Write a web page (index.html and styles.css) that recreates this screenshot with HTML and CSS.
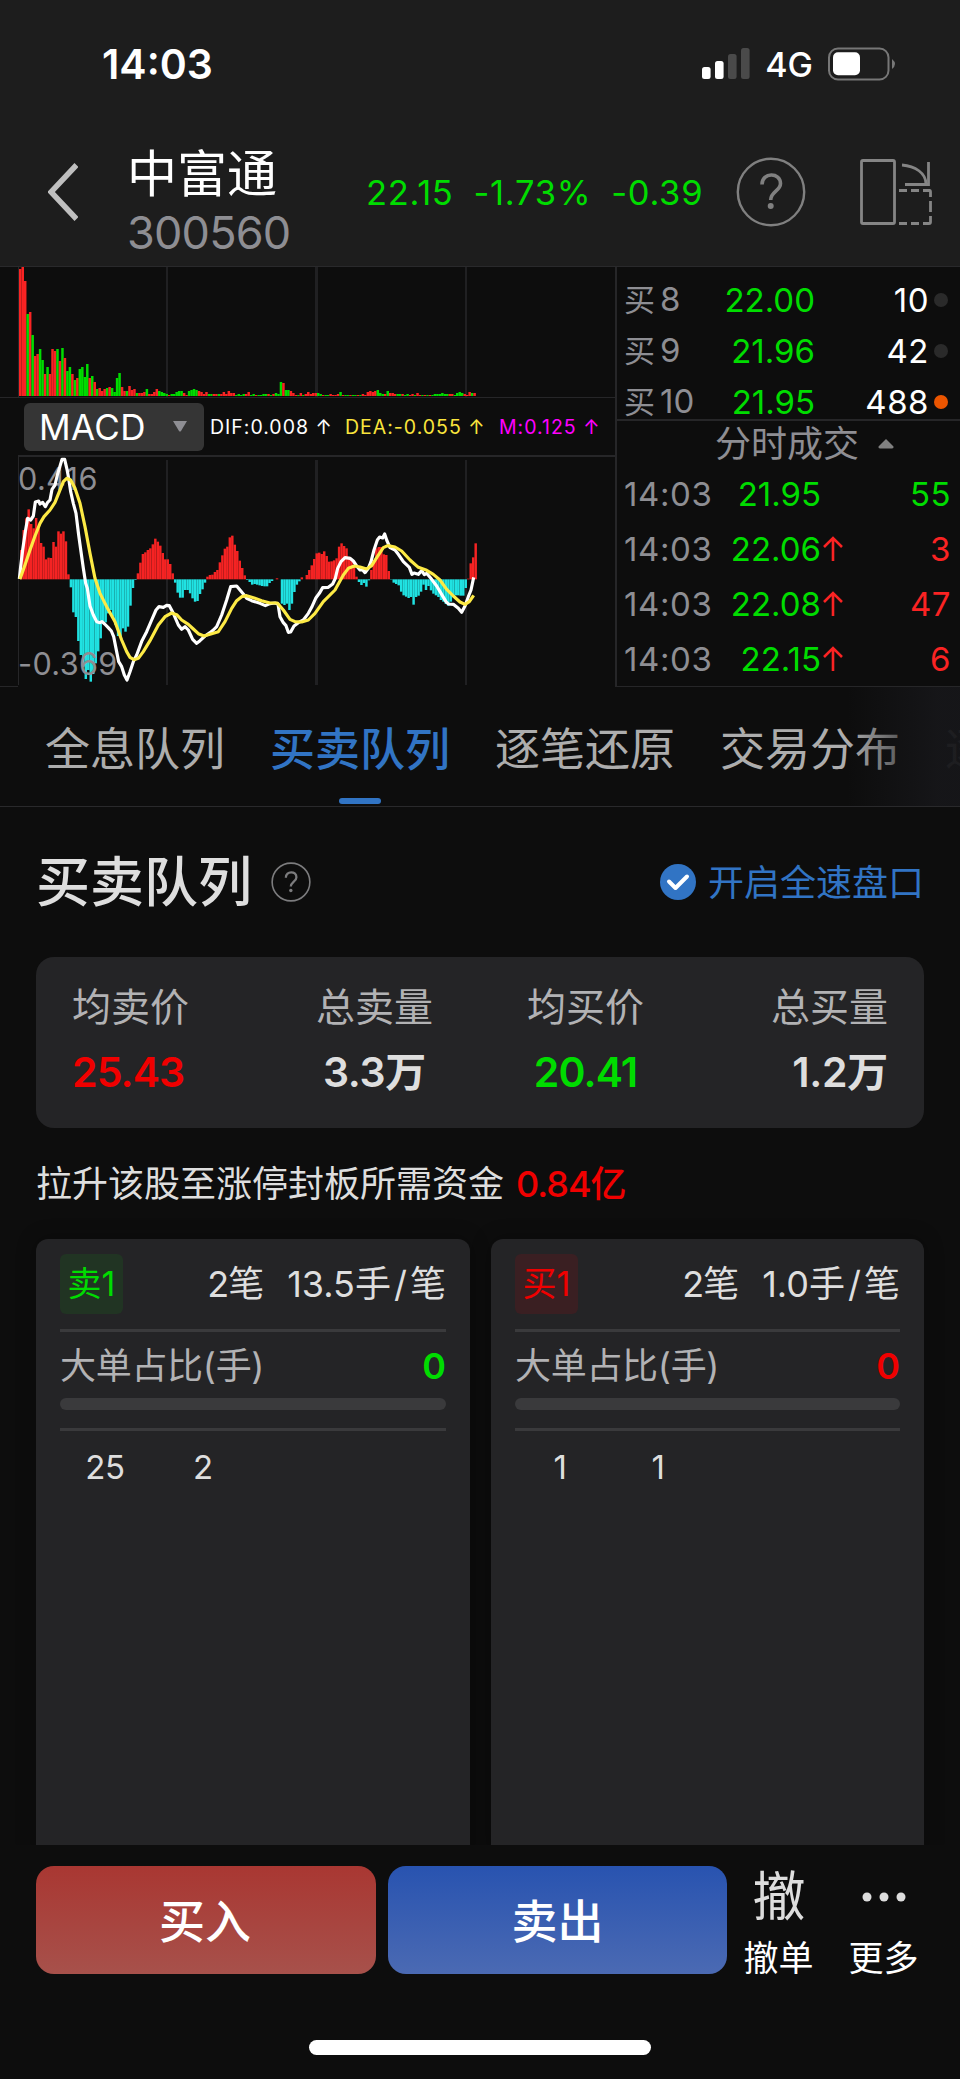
FILE: index.html
```html
<!DOCTYPE html>
<html lang="zh-CN">
<head>
    <meta charset="UTF-8">
    <meta name="viewport" content="width=device-width, initial-scale=1.0">
    <title>中富通 300560</title>
    <link rel="stylesheet" href="styles.css">
</head>
<body>
    <header class="header">
        <div class="status">
            <span class="clock">14:03</span>
            <div class="status-icons">
                <svg class="signal" width="48" height="32" viewBox="0 0 48 32">
                    <rect x="0" y="19" width="8.6" height="12" rx="2.5" fill="#fff"/>
                    <rect x="13" y="13" width="8.6" height="18" rx="2.5" fill="#fff"/>
                    <rect x="26" y="6" width="8.6" height="25" rx="2.5" fill="#4a4a4a"/>
                    <rect x="39" y="0" width="8.6" height="31" rx="2.5" fill="#4a4a4a"/>
                </svg>
                <span class="network">4G</span>
                <svg class="battery" width="68" height="34" viewBox="0 0 68 34">
                    <rect x="1" y="1.5" width="59.5" height="31" rx="9" fill="none" stroke="#777" stroke-width="2"/>
                    <rect x="5" y="5.3" width="27" height="23" rx="5" fill="#fff"/>
                    <path d="M64 12 Q70 17 64 22 Z" fill="#777"/>
                </svg>
            </div>
        </div>
        <div class="nav">
            <svg class="back" width="30" height="58" viewBox="0 0 30 58">
                <path d="M28.500 2 L3 29 L28.500 56" fill="none" stroke="#bfbfbf" stroke-width="5.500"/>
            </svg>
            <div class="stock">
                <span class="stock-name">中富通</span>
                <span class="stock-code">300560</span>
            </div>
            <div class="quote">
                <span class="q-price">22.15</span>
                <span class="q-percent">-1.73%</span>
                <span class="q-change">-0.39</span>
            </div>
            <svg class="help" width="70" height="70" viewBox="0 0 70 70">
                <circle cx="35" cy="35" r="33.200" fill="none" stroke="#808080" stroke-width="2.400"/>
                <path d="M26 27.500 C26 15 44.500 15 44.500 26.500 C44.500 34 34.700 34.500 34.700 43" fill="none" stroke="#808080" stroke-width="3.600"/>
                <circle cx="34.700" cy="49" r="3" fill="#808080"/>
            </svg>
            <svg class="rotate" width="74" height="68" viewBox="0 0 74 68" fill="none" stroke="#858585" stroke-width="2.800">
                <rect x="2.500" y="2.500" width="33" height="63" rx="1.500"/>
                <path d="M43 7 C56 8 67 15 67 26"/>
                <path d="M69.500 4 V26.500 H46"/>
                <path d="M40 32.500 H48 M52 32.500 H60 M64 32.500 H70.500 Q71.500 32.500 71.500 34 V39 M71.500 43 V54 M71.500 58 V64 Q71.500 65.500 70 65.500 H64 M60 65.500 H52 M48 65.500 H40"/>
            </svg>
        </div>
    </header>

    <section class="market">
        <div class="charts">
            <svg class="volume" id="volume" width="615" height="130" viewBox="0 0 615 130">
                <path class="grid-line" d="M166 0h2v130h-2z M315 0h3v130h-3z M465 0h2v130h-2z"/>
                <path class="axis-line" d="M18 0h1v130h-1z"/>
            </svg>
            <div class="indicator">
                <div class="select">
                    <span>MACD</span>
                    <svg width="14" height="11" viewBox="0 0 14 11"><path d="M0 0 H14 L8 10 Q7 11 6 10 Z" fill="#8e8e93"/></svg>
                </div>
                <span class="dif">DIF:0.008 ↑</span>
                <span class="dea">DEA:-0.055 ↑</span>
                <span class="macd">M:0.125 ↑</span>
            </div>
            <svg class="macd-chart" id="macd" width="615" height="232" viewBox="0 15 1845 696">
                <path class="grid-line" d="M498 30h6v675h-6z M945 30h9v675h-9z M1395 30h6v675h-6z"/>
                <path class="axis-line" d="M54 15h1791v6h-1791z M54 15h3v690h-3z M0 708h54v3h-54z"/>
                <g id="macdBars"></g>
                <text class="axis-label" x="54" y="119">0.416</text>
                <text class="axis-label" x="54" y="676">-0.369</text>
                <polyline class="line-dif" points="58,387 62,350 68,300 76,245 83,205 92,210 100,198 106,156 116,153 120,162 128,157 136,170 143,157 150,150 156,118 165,105 172,75 178,55 186,28 194,28 201,58 206,85 212,125 220,160 228,190 236,255 243,305 250,355 257,400 262,415 270,468 280,495 290,515 300,518 306,515 314,522 324,532 334,543 341,560 348,595 356,635 365,650 373,675 381,690 390,665 400,635 410,615 426,572 440,545 455,510 468,480 477,470 490,472 500,466 508,467 520,490 535,525 545,538 555,530 565,540 578,568 590,580 600,572 615,558 630,548 640,540 650,530 665,495 680,450 692,410 710,408 720,420 730,432 740,445 755,452 780,460 796,467 810,461 825,459 834,462 840,500 850,518 858,527 865,547 872,546 882,528 895,518 910,510 925,490 935,472 948,443 958,430 968,413 985,412 998,402 1006,385 1013,355 1023,335 1035,323 1050,325 1060,333 1070,348 1080,360 1088,360 1095,368 1105,355 1113,335 1122,300 1132,270 1139,261 1148,264 1154,252 1160,270 1170,293 1185,300 1195,313 1210,335 1228,352 1236,373 1242,369 1255,373 1265,362 1273,374 1280,370 1295,388 1310,408 1325,433 1338,455 1345,462 1360,463 1375,475 1385,487 1395,468 1405,440 1413,420 1421,382"/>
                <polyline class="line-dea" points="60,387 75,345 90,300 105,258 120,220 132,200 150,180 165,157 178,125 190,95 200,85 212,90 225,115 240,160 255,230 270,310 285,385 300,430 320,470 345,515 365,570 380,605 390,622 402,629 415,625 430,605 450,572 475,525 495,500 515,489 530,494 545,510 565,523 580,537 595,551 612,558 630,553 655,545 675,515 695,475 710,452 725,440 740,437 760,443 785,452 810,459 832,459 850,480 870,508 885,515 905,516 925,510 945,490 970,455 1005,420 1030,375 1045,355 1063,348 1080,351 1100,357 1115,347 1132,320 1150,293 1163,287 1185,291 1205,303 1230,330 1255,352 1280,361 1300,373 1320,390 1340,418 1360,438 1380,456 1395,463 1408,455 1421,436"/>
            </svg>
        </div>
        <div class="side">
            <div class="bids">
                <div class="bid"><span class="label">买<i>8</i></span><span class="price">22.00</span><span class="amount">10</span><b class="dot"></b></div>
                <div class="bid"><span class="label">买<i>9</i></span><span class="price">21.96</span><span class="amount">42</span><b class="dot"></b></div>
                <div class="bid"><span class="label">买<i>10</i></span><span class="price">21.95</span><span class="amount">488</span><b class="dot hot"></b></div>
            </div>
            <div class="ticks-title">
                <span>分时成交</span>
                <svg width="16" height="10" viewBox="0 0 16 10"><path d="M8 0 L15.500 7.500 Q16 9.500 14 9.500 H2 Q0 9.500 .5 7.500 Z" fill="#808080"/></svg>
            </div>
            <div class="tick"><span class="time">14:03</span><span class="price">21.95</span><span class="arrow"></span><span class="amount down">55</span></div>
            <div class="tick"><span class="time">14:03</span><span class="price">22.06</span><span class="arrow"><svg width="20" height="26" viewBox="0 0 20 26"><path d="M10 25 V2 M1 11 L10 2 L19 11"/></svg></span><span class="amount up">3</span></div>
            <div class="tick"><span class="time">14:03</span><span class="price">22.08</span><span class="arrow"><svg width="20" height="26" viewBox="0 0 20 26"><path d="M10 25 V2 M1 11 L10 2 L19 11"/></svg></span><span class="amount up">47</span></div>
            <div class="tick"><span class="time">14:03</span><span class="price">22.15</span><span class="arrow"><svg width="20" height="26" viewBox="0 0 20 26"><path d="M10 25 V2 M1 11 L10 2 L19 11"/></svg></span><span class="amount up">6</span></div>
        </div>
    </section>

    <nav class="tabs">
        <span class="tab">全息队列</span>
        <span class="tab active">买卖队列</span>
        <span class="tab">逐笔还原</span>
        <span class="tab">交易分布</span>
        <span class="tab">逐笔</span>
    </nav>

    <main class="content">
        <div class="section-head">
            <h1>买卖队列</h1>
            <svg class="tip" width="40" height="40" viewBox="0 0 70 70">
                <circle cx="35" cy="35" r="33" fill="none" stroke="#7c7c7e" stroke-width="2.800"/>
                <path d="M26 27.500 C26 15 44.500 15 44.500 26.500 C44.500 34 34.700 34.500 34.700 43" fill="none" stroke="#7c7c7e" stroke-width="4"/>
                <circle cx="34.700" cy="50" r="3" fill="#7c7c7e"/>
            </svg>
            <div class="full-speed">
                <svg width="36" height="36" viewBox="0 0 36 36">
                    <circle cx="18" cy="18" r="18" fill="#3174c4"/>
                    <path d="M9 17.500 L15.500 24 L27 12.500" fill="none" stroke="#fff" stroke-width="4" stroke-linecap="round" stroke-linejoin="round"/>
                </svg>
                <span>开启全速盘口</span>
            </div>
        </div>

        <div class="summary">
            <div class="pair">
                <div class="stat"><span>均卖价</span><strong class="red">25.43</strong></div>
                <div class="stat"><span>总卖量</span><strong>3.3万</strong></div>
            </div>
            <div class="pair">
                <div class="stat"><span>均买价</span><strong class="green">20.41</strong></div>
                <div class="stat last"><span>总买量</span><strong>1.2万</strong></div>
            </div>
        </div>

        <p class="funds">拉升该股至涨停封板所需资金<strong>0.84亿</strong></p>

        <div class="queues">
            <div class="queue">
                <div class="queue-head">
                    <span class="badge sell">卖1</span>
                    <span class="count">2笔</span>
                    <span>13.5手<i>/</i>笔</span>
                </div>
                <div class="ratio"><span>大单占比(手)</span><strong class="green">0</strong></div>
                <div class="bar"></div>
                <div class="orders"><span>25</span><span>2</span></div>
            </div>
            <div class="queue">
                <div class="queue-head">
                    <span class="badge buy">买1</span>
                    <span class="count">2笔</span>
                    <span>1.0手<i>/</i>笔</span>
                </div>
                <div class="ratio"><span>大单占比(手)</span><strong class="red">0</strong></div>
                <div class="bar"></div>
                <div class="orders"><span>1</span><span>1</span></div>
            </div>
        </div>
    </main>

    <footer class="footer">
        <button class="btn buy-btn">买入</button>
        <button class="btn sell-btn">卖出</button>
        <div class="action">
            <span class="action-icon">撤</span>
            <span>撤单</span>
        </div>
        <div class="action more">
            <span class="action-icon"><svg width="44" height="10" viewBox="0 0 44 10" fill="#ddd"><circle cx="5" cy="5" r="4.500"/><circle cx="22" cy="5" r="4.500"/><circle cx="39" cy="5" r="4.500"/></svg></span>
            <span>更多</span>
        </div>
    </footer>
    <div class="home-bar"></div>

    <script src="script.js"></script>
</body>
</html>
```
FILE: styles.css
```css
* { box-sizing: border-box; }
body {
    margin: 0;
    width: 960px;
    height: 2079px;
    overflow: hidden;
    background: #0d0d0d;
    color: #dedede;
    font-family: Inter, "Noto Sans CJK SC", sans-serif;
    display: flex;
    flex-direction: column;
}
svg { display: block; flex: none; }
h1, p { margin: 0; }
span { white-space: nowrap; }
.red { color: #f00000; }
.green { color: #00dc00; }

/* header */
.header {
    height: 267px;
    flex: none;
    background: #1d1d1d;
    border-bottom: 1px solid #29292b;
}
.status {
    height: 128px;
    padding: 0 64px 0 102px;
    display: flex;
    justify-content: space-between;
    align-items: center;
}
.clock {
    font-size: 41px;
    font-weight: 600;
    color: #fff;
}
.status-icons {
    display: flex;
    align-items: center;
}
.network {
    margin: 2px 15px 0 15px;
    font-size: 34px;
    font-weight: 500;
    line-height: 40px;
    color: #fff;
}
.nav {
    height: 127px;
    padding: 0 25px 0 48px;
    display: flex;
    align-items: center;
}
.stock {
    width: 239px;
    margin-left: 49px;
    padding-top: 25px;
    display: flex;
    flex-direction: column;
}
.stock-name {
    font-size: 50px;
    line-height: 58px;
    color: #fff;
}
.stock-code {
    font-size: 45px;
    line-height: 60px;
    letter-spacing: -0.8px;
    color: #8e8e93;
}
.quote {
    width: 370px;
    padding-top: 2px;
    display: flex;
    gap: 20px;
    font-size: 34.5px;
    line-height: 40px;
    letter-spacing: 0.7px;
    color: #00dc00;
}
.rotate { margin-left: 53px; }

/* charts and order book */
.market {
    height: 420px;
    flex: none;
    display: flex;
}
.charts { width: 615px; }
.grid-line { fill: #202022; }
.axis-line { fill: #262628; }
.indicator {
    height: 58px;
    padding-left: 24px;
    border-top: 1px solid #262628;
    display: flex;
    align-items: center;
    font-size: 19.5px;
    letter-spacing: 1px;
}
.select {
    width: 180px;
    height: 48px;
    margin-right: 6px;
    padding: 0 17px 0 15px;
    border-radius: 6px;
    background: #353535;
    color: #fff;
    font-size: 35px;
    letter-spacing: 0.4px;
    display: flex;
    align-items: center;
    justify-content: space-between;
}
.dif { width: 135px; color: #fff; }
.dea { width: 154px; color: #fae53c; }
.macd { color: #f0f; }
.axis-label {
    font-size: 92px;
    letter-spacing: 1px;
    fill: #8e8e93;
}
.line-dif, .line-dea {
    fill: none;
    stroke-width: 9.5;
    stroke-linejoin: round;
}
.line-dif { stroke: #fff; }
.line-dea { stroke: #fdea45; }
.side {
    width: 345px;
    border-left: 2px solid #262628;
    border-bottom: 1px solid #262628;
    font-size: 33px;
}
.bids {
    height: 152px;
    padding-top: 7px;
}
.bid, .tick {
    height: 51px;
    padding-left: 7px;
    display: flex;
    align-items: center;
    line-height: 48px;
    color: #8e8e93;
}
.tick { height: 55px; }
.label { width: 80px; font-size: 31px; }
.label i {
    margin-left: 5px;
    font-style: normal;
    font-size: 33px;
}
.price {
    width: 111px;
    text-align: right;
    color: #00dc00;
}
.bid .amount {
    width: 114px;
    text-align: right;
    letter-spacing: 0.5px;
    color: #fff;
}
.dot {
    width: 14px;
    height: 14px;
    margin-left: 5px;
    border-radius: 50%;
    background: #2a2a2a;
}
.dot.hot { background: #eb5500; }
.ticks-title {
    height: 47px;
    padding-left: 98px;
    border-top: 2px solid #262628;
    display: flex;
    align-items: center;
    gap: 19px;
    font-size: 36px;
    line-height: 44px;
    color: #8e8e93;
}
.time { width: 87px; letter-spacing: 0.6px; }
.tick .price { width: 110px; }
.arrow {
    width: 22px;
    margin-left: 2px;
    fill: none;
    stroke: #fa2323;
    stroke-width: 2.6;
}
.tick .amount {
    width: 106px;
    text-align: right;
    letter-spacing: 0.5px;
}
.up { color: #fa2323; }
.down { color: #00dc00; }

/* tabs */
.tabs {
    position: relative;
    height: 120px;
    flex: none;
    padding-left: 45px;
    border-bottom: 1px solid #29292b;
    display: flex;
    gap: 45px;
    overflow: hidden;
}
.tabs::after {
    content: "";
    position: absolute;
    top: 0;
    right: 0;
    width: 112px;
    height: 119px;
    background: linear-gradient(to right, rgba(22, 22, 25, 0), rgba(22, 22, 25, 0.95) 80%);
}
.tab {
    width: 180px;
    flex: none;
    font-size: 45px;
    line-height: 126px;
    color: #adadad;
}
.tab.active {
    position: relative;
    color: #3174c4;
    font-weight: 500;
}
.tab.active::after {
    content: "";
    position: absolute;
    left: 69px;
    bottom: 2px;
    width: 42px;
    height: 6px;
    border-radius: 3px;
    background: #3174c4;
}

/* queue section */
.content {
    height: 1038px;
    flex: none;
    padding: 0 36px;
    overflow: hidden;
}
.section-head {
    height: 150px;
    display: flex;
    align-items: center;
}
.section-head h1 {
    padding-top: 2px;
    font-size: 54px;
    font-weight: 500;
    line-height: 60px;
}
.tip { margin-left: 19px; }
.full-speed {
    margin-left: auto;
    display: flex;
    align-items: center;
    gap: 12px;
    font-size: 36px;
    line-height: 40px;
    color: #3174c4;
}
.full-speed span { padding-top: 2px; }
.summary {
    height: 171px;
    padding: 20px 36px 0;
    border-radius: 18px;
    background: #242426;
    display: flex;
    justify-content: space-between;
}
.pair {
    width: 361px;
    display: flex;
    justify-content: space-between;
}
.stat {
    display: flex;
    flex-direction: column;
    align-items: center;
    font-size: 39px;
    line-height: 60px;
    color: #b2b2b4;
}
.stat:first-child strong.red { align-self: flex-start; }
.stat.last { align-items: flex-end; }
.stat strong {
    font-size: 41px;
    line-height: 70px;
    font-weight: 600;
    letter-spacing: -0.3px;
}
.stat strong.red, .stat strong.green { letter-spacing: -0.9px; }
.stat strong:not(.red):not(.green) { color: #dedede; }
.funds {
    height: 111px;
    font-size: 36px;
    line-height: 112px;
}
.funds strong {
    margin-left: 12px;
    font-weight: 500;
    letter-spacing: -1px;
    color: #f00000;
}
.queues {
    display: grid;
    grid-template-columns: 434px 433px;
    gap: 21px;
}
.queue {
    height: 620px;
    padding: 15px 24px;
    border-radius: 12px;
    background: #242426;
    box-shadow: 0 0 20px rgba(0, 0, 0, 0.3);
}
.queue-head {
    height: 78px;
    padding-bottom: 15px;
    border-bottom: 3px solid #3a3a3c;
    display: flex;
    align-items: center;
    gap: 24px;
    font-size: 36px;
    line-height: 60px;
}
.queue-head i {
    margin: 0 3px;
    font-style: normal;
}
.badge {
    width: 63px;
    height: 60px;
    border-radius: 6px;
    font-size: 34px;
    text-align: center;
}
.sell {
    background: #213423;
    color: #00dc00;
}
.buy {
    background: #3a1f22;
    color: #f00000;
}
.count { margin-left: auto; letter-spacing: -1px; }
.ratio {
    height: 66px;
    display: flex;
    justify-content: space-between;
    font-size: 36px;
    line-height: 68px;
    color: #b2b2b4;
}
.ratio span { letter-spacing: -0.3px; }
.ratio strong { font-weight: 600; }
.bar {
    height: 12px;
    border-radius: 6px;
    background: #3a3a3c;
}
.orders {
    margin-top: 18px;
    border-top: 3px solid #3a3a3c;
    display: flex;
    font-size: 33px;
    line-height: 72px;
    text-align: center;
}
.orders span { width: 98px; letter-spacing: -0.3px; }
.orders span:first-child { margin-left: -4px; }

/* bottom bar */
.footer {
    height: 195px;
    flex: none;
    padding: 21px 36px 0;
    display: flex;
}
.btn {
    width: 340px;
    height: 108px;
    margin: 0 12px 0 0;
    padding: 0 2px 4px 0;
    border: none;
    border-radius: 18px;
    color: #fff;
    font-family: inherit;
    font-size: 46px;
    font-weight: 500;
}
.buy-btn { background: linear-gradient(#a93732, #a7514b); }
.sell-btn {
    width: 339px;
    padding-right: 0;
    background: linear-gradient(#2853b0, #4b6ab3);
}
.action {
    width: 79px;
    display: flex;
    flex-direction: column;
    align-items: center;
    font-size: 35px;
    line-height: 60px;
    color: #fff;
}
.action-icon {
    height: 62px;
    padding-left: 1px;
    display: flex;
    align-items: center;
    font-size: 53px;
    color: #ddd;
}
.more { margin-left: 26px; }
.home-bar {
    width: 342px;
    height: 15px;
    flex: none;
    margin: 0 auto;
    border-radius: 8px;
    background: #fff;
}
```
FILE: script.js
```js
var SVG_NS = "http://www.w3.org/2000/svg";

// one letter per minute for the bar colour, followed by its height
var volume = "r127 r129 r115 g82 r84 g61 r40 r42 g47 g36 r22 g29 r22 r47 r45 g47 r35 g48 r38 g25 g29 r22 g16 r18 g27 g29 g19 g32 r18 g20 r14 g7 r8 r5 r7 g8 r9 g8 g4 g18 g23 r9 r5 g5 r10 r6 r7 g3 r3 r3 r4 g7 r2 r2 r4 r7 g5 g4 g3 g2 " +
    "r1 g2 g2 g4 g5 g5 r3 r1 g5 g6 g7 g6 r5 r4 r2 r4 g2 g2 r2 r2 g2 r2 r4 r2 r5 r3 r3 g1 g2 g1 g2 r2 r4 g1 g2 r1 g1 g1 g2 g2 r2 g1 r2 g3 g2 g14 r13 g6 g6 r5 r3 r1 g1 r3 g1 r2 r4 r2 r3 r3 " +
    "g3 g2 r1 g1 g1 r2 r1 r1 r2 g4 r1 g1 g1 r1 g1 g1 r1 g1 r2 r1 r4 r5 r4 r5 g6 g3 g2 r2 g5 r3 r3 r2 g2 g2 r2 g1 g2 r1 r2 g1 r3 r1 g1 r1 g1 r1 g1 g2 g2 g2 g3 g2 g2 r2 r2 g1 g3 g4 g3 r2 r1 r4 g3 r3";

// bar ends, zero line is at 388
var macd = [
    300,240,205,178,222,235,204,235,279,290,328,323,324,276,290,244,251,244,274,373,
    412,487,501,573,615,650,687,660,695,672,640,604,565,515,517,490,480,500,525,558,560,535,545,530,467,414,390,
    370,338,312,307,300,295,283,266,275,287,309,328,328,342,370,
    398,428,443,443,420,420,430,445,455,453,432,418,398,
    380,375,374,366,360,337,316,296,290,262,257,284,303,332,354,376,
    390,396,404,402,404,406,408,409,409,399,393,388,385,388,461,465,461,480,461,426,404,394,382,388,
    375,360,346,327,310,308,312,304,318,335,334,331,325,290,280,288,295,320,330,350,380,
    396,405,399,410,391,360,330,295,291,291,313,315,363,
    389,398,402,406,425,436,440,444,441,464,441,437,425,404,420,408,421,431,436,441,450,455,462,467,455,440,436,436,437,437,414,
    386,340,322,280
];

function addBar(parent, x, y, width, height, color) {
    var rect = document.createElementNS(SVG_NS, "rect");
    rect.setAttribute("x", x);
    rect.setAttribute("y", y);
    rect.setAttribute("width", width);
    rect.setAttribute("height", height);
    rect.setAttribute("fill", color);
    parent.appendChild(rect);
}

volume.split(" ").forEach(function(item, i) {
    var h = Number(item.slice(1));
    var color = item.charAt(0) === "r" ? "#fa2323" : "#00dc00";
    addBar(document.getElementById("volume"), 19 + i * 2.483, 129 - h, 2.5, h, color);
});

macd.forEach(function(y, i) {
    var color = y < 388 ? "#f52323" : "#20e2e2";
    addBar(document.getElementById("macdBars"), 60 + i * 7.45, Math.min(y, 388), 7.4, Math.abs(388 - y), color);
});
```
